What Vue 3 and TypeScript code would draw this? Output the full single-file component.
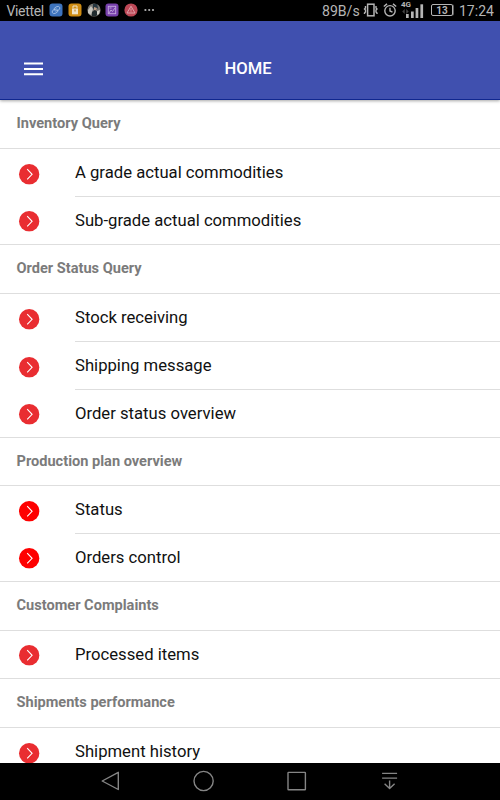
<script setup lang="ts">
interface Item { label: string; pure?: boolean }
interface Group { title: string; items: Item[]; continues?: boolean }

const groups: Group[] = [
  { title: 'Inventory Query', items: [{ label: 'A grade actual commodities' }, { label: 'Sub-grade actual commodities' }] },
  { title: 'Order Status Query', items: [{ label: 'Stock receiving' }, { label: 'Shipping message' }, { label: 'Order status overview' }] },
  { title: 'Production plan overview', items: [{ label: 'Status', pure: true }, { label: 'Orders control', pure: true }] },
  { title: 'Customer Complaints', items: [{ label: 'Processed items' }] },
  { title: 'Shipments performance', items: [{ label: 'Shipment history' }], continues: true },
]
</script>

<template>
  <div class="screen">
    <div class="status">
      <span class="carrier">Viettel</span>
      <div class="notifs">
        <svg viewBox="0 0 14 14"><rect x=".5" y=".5" width="13" height="13" rx="3" fill="#3d73bd" /><g fill="none" stroke="#a9c3e6" stroke-width=".8"><ellipse cx="8" cy="5.7" rx="3" ry="2" transform="rotate(-25 8 5.7)" /><ellipse cx="6" cy="8.3" rx="3" ry="2" transform="rotate(-25 6 8.3)" /></g></svg>
        <svg viewBox="0 0 14 14"><rect x=".5" y=".5" width="13" height="13" rx="3" fill="#cf8c12" /><path d="M4 5.5h6v5.8H4z" fill="#eee2c8" /><path d="M5 5.3V3h4v2.3" fill="none" stroke="#eee2c8" /><path d="M7 6.5v2" stroke="#b47a18" /></svg>
        <svg viewBox="0 0 14 14"><circle cx="7" cy="7" r="6.6" fill="#75736f" /><path d="M1 7l3-4 2 3-2 6-3-2z" fill="#c6c5bf" /><path d="M6 1h4l1 4-3 3-2-3z" fill="#263640" /><path d="M7 4l3 1-1 3-2-1z" fill="#bd9c83" /><path d="M5 9l3-2 4 3-3 3H5z" fill="#202b2f" /><path d="M10 8l3-1-1 4-2 1z" fill="#d1d0ca" /></svg>
        <svg viewBox="0 0 14 14"><rect x=".5" y=".5" width="13" height="13" rx="3" fill="#7841ac" /><g fill="none" stroke="#c4a9dc" stroke-width=".9"><rect x="3.3" y="3.3" width="7.4" height="7.4" /><path d="M4 10l2-3 1.5 1.5L10 5M4.5 5h2" /></g></svg>
        <svg viewBox="0 0 14 14"><circle cx="7" cy="7" r="6.6" fill="#bd4856" /><path d="M7 3.2L11 10H3zM7 5.6v2.2M7 8.4v.8" fill="none" stroke="#dda1a9" stroke-linejoin="round" /></svg>
        <svg viewBox="0 0 14 14"><g fill="#b5b5b5"><circle cx="2.4" cy="7" r="1.1" /><circle cx="6.2" cy="7" r="1.1" /><circle cx="10" cy="7" r="1.1" /></g></svg>
      </div>
      <span class="rate">89B/s</span>
      <svg class="vibrate" viewBox="0 0 16 14"><g fill="none" stroke="#b5b5b5"><rect x="4.6" y="1.2" width="6.4" height="11.6" stroke-width="1.5" /><path d="M2.5 3v2l-1 1 1 1v2l-1 1v1M13 3v2l1 1-1 1v2l1 1v1" stroke-width="1.4" /></g></svg>
      <svg class="alarm" viewBox="0 0 14 14"><g fill="none" stroke="#b5b5b5" stroke-width="1.4"><circle cx="7" cy="7.8" r="5.2" /><path d="M.8 3.5L4 .9M13.2 3.5L10 .9M7 4.8V8l2.5 1.2" /></g></svg>
      <div class="signal">
        <span class="lte">4G</span>
        <svg viewBox="0 0 23 18"><g fill="#b5b5b5"><rect x="5" y="13" width="2.7" height="4" /><rect x="10" y="10.5" width="2.7" height="6.5" /><rect x="14.6" y="7" width="2.7" height="10" /><rect x="19.4" y="3.3" width="2.7" height="13.7" /></g><path d="M3.7 8L1.2 10.5 3.7 13zM5.2 8l2.5 2.5L5.2 13z" fill="#444" /></svg>
      </div>
      <div class="battery">13</div>
      <span class="clock">17:24</span>
    </div>
    <header class="bar">
      <svg class="burger" viewBox="0 0 20 14"><path d="M0 1.5h19M0 7h19M0 12.3h19" stroke="#fff" stroke-width="2" /></svg>
      <h1>HOME</h1>
    </header>
    <main class="list">
      <section v-for="g in groups" :key="g.title" :class="{ continues: g.continues }">
        <h2>{{ g.title }}</h2>
        <ul>
          <li v-for="item in g.items" :key="item.label" :class="{ pure: item.pure }">
            <svg class="arrow" viewBox="0 0 21 21"><circle cx="10.5" cy="10.5" r="10.2" /><path d="M8.5 5.4l4.9 5.1-4.9 5.1" fill="none" stroke="#fff" stroke-width="1.1" /></svg>
            <span class="label">{{ item.label }}</span>
          </li>
        </ul>
      </section>
    </main>
    <nav class="keys">
      <svg viewBox="0 0 24 24"><path d="M19.3 3.3v17.2L3.2 12z" /></svg>
      <svg viewBox="0 0 24 24"><circle cx="12" cy="12" r="9.6" /></svg>
      <svg viewBox="0 0 24 24"><rect x="3.4" y="3.4" width="17.4" height="17.4" rx=".5" /></svg>
      <svg viewBox="0 0 24 24"><path d="M4.5 4.4h15M4.5 9.1h15M12 11.5v8M7 14.7l5 4.7 5-4.7" /></svg>
    </nav>
  </div>
</template>

<style>
body { margin: 0; overflow: hidden; }
</style>

<style scoped>
.screen { width: 500px; height: 800px; display: flex; flex-direction: column; overflow: hidden; background: #fff; font-family: Roboto, "Liberation Sans", sans-serif; }
svg { display: block; flex: none; }
.status { height: 21px; flex: none; display: flex; align-items: center; background: #000; color: #b5b5b5; font-size: 14px; line-height: 21px; white-space: nowrap; }
.carrier, .rate, .clock { padding-top: 2px; }
.carrier { width: 42.5px; padding-left: 6.5px; letter-spacing: -.35px; }
.notifs { display: flex; gap: 4.8px; margin-bottom: 1px; }
.notifs svg { width: 14px; height: 14px; }
.rate { width: 39px; margin-left: auto; font-size: 14.1px; }
.vibrate { width: 16px; height: 14px; margin: 0 0 1px 2px; }
.alarm { width: 14px; height: 14px; margin: 0 0 1px 4px; }
.signal { width: 23px; height: 18px; margin: 0 0 1px 4px; position: relative; }
.signal svg { width: 23px; height: 18px; }
.lte { position: absolute; left: 0; top: -1px; font-size: 8px; line-height: 9px; font-weight: 700; }
.battery { box-sizing: border-box; width: 22px; height: 12px; margin: 0 0 1px 7px; border: 1px solid #b5b5b5; border-radius: 2px; font-size: 10px; font-weight: 700; line-height: 11px; text-align: center; box-shadow: 1px 0 0 -0.2px #777; }
.clock { width: 35px; margin: 0 6px 0 6px; }
.bar { height: 79px; flex: none; box-sizing: border-box; padding-top: 17px; display: grid; grid-template-columns: 1fr auto 1fr; align-items: center; background: #4050af; border-bottom: 1px solid #10278f; box-shadow: 0 1px 3px rgba(0, 0, 0, .35); z-index: 1; }
.burger { width: 20px; height: 14px; margin: 0 0 0 24px; }
h1 { margin: 0; padding-right: 4px; font-size: 16.6px; line-height: 20px; font-weight: 500; color: #fff; }
.list { height: 663px; flex: none; box-sizing: border-box; padding-top: .35px; overflow: hidden; }
h2 { margin: 0; box-sizing: border-box; height: 48.7px; padding-left: 16.5px; font-size: 14.58px; line-height: 47.2px; font-weight: 700; color: #7b7b7b; border-bottom: 1px solid #dedede; }
ul { margin: 0; padding: 0; list-style: none; border-bottom: 1px solid #dedede; }
li { height: 48px; display: flex; align-items: flex-start; }
li:last-child { height: 47px; }
.arrow { width: 21px; height: 21px; margin: 15px 0 0 18.5px; fill: #e92d31; transform: translate(-.3px, -.2px); }
li:last-child .arrow { margin-top: 14px; }
.continues li:last-child .arrow { margin-top: 15px; }
.pure .arrow { fill: #fe0000; }
.label { box-sizing: border-box; flex: 1; height: 48px; margin-left: 35.5px; font-size: 16.68px; line-height: 48px; color: #111; border-bottom: 1px solid #dedede; }
li:last-child .label { height: 47px; border-bottom: 0; }
.keys { height: 37px; flex: none; background: #000; display: flex; gap: 69px; padding: 0 0 1px 99px; box-sizing: border-box; align-items: center; }
.keys svg { width: 24px; height: 24px; fill: none; stroke: #858585; stroke-width: 1.4; stroke-linejoin: round; }
.keys svg:nth-child(n + 2) { transform: translateX(-.4px); }
</style>
